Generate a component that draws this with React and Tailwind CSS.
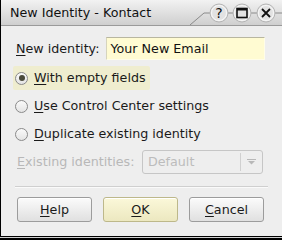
import React from "react";

const FONT = { fontFamily: '"DejaVu Sans", "Liberation Sans", sans-serif' };

function U({ children }) {
  return <span className="underline underline-offset-2">{children}</span>;
}

function Radio({ checked, label, hl }) {
  return (
    <div
      className={`flex h-[24px] items-center gap-[6px] self-start rounded-[2px] pl-[2px] pr-[4px] ${
        hl ? "bg-[#efedcf]" : ""
      }`}
    >
      <span className="flex h-[13px] w-[13px] items-center justify-center rounded-full border border-[#8a8a8a] bg-gradient-to-b from-[#fafafa] to-[#e4e4e4]">
        {checked && <span className="h-[6px] w-[6px] rounded-full bg-[#4a4a3a]" />}
      </span>
      <span className="text-[12.7px] text-[#1a1a1a]">{label}</span>
    </div>
  );
}

function Btn({ children, active }) {
  return (
    <div
      className={`flex h-[25px] w-[75px] items-center justify-center rounded-[3px] border text-[12.7px] text-[#1a1a1a] shadow-[0_1px_0_#ffffff_inset] ${
        active
          ? "border-[#bdb88a] bg-gradient-to-b from-[#fbf8d9] to-[#ece8c0]"
          : "border-[#9c9c9c] bg-gradient-to-b from-[#fbfbfb] to-[#e0e0e0]"
      }`}
    >
      {children}
    </div>
  );
}

function TitleButtons() {
  return (
    <svg width="100" height="25" viewBox="0 0 100 25" className="absolute right-0 top-0">
      <line x1="8" y1="25" x2="22" y2="13" stroke="#8a8a8a" strokeWidth="1" />
      <line x1="22" y1="13" x2="100" y2="13" stroke="#8a8a8a" strokeWidth="1" />
      {[37, 60, 84].map((cx) => (
        <g key={cx}>
          <circle cx={cx} cy="13" r="9" fill="#e8e8e8" stroke="#b4b4b4" />
          <circle cx={cx} cy="13" r="7.5" fill="#e2e2e2" stroke="#f8f8f8" />
        </g>
      ))}
      <text x="37" y="18" textAnchor="middle" fontSize="14" fontFamily="DejaVu Sans" fill="#111">?</text>
      <rect x="55" y="8.5" width="10" height="9" fill="none" stroke="#111" strokeWidth="1.6" />
      <line x1="55" y1="9.5" x2="65" y2="9.5" stroke="#111" strokeWidth="2" />
      <path d="M80 9 L88 17 M88 9 L80 17" stroke="#111" strokeWidth="1.8" />
    </svg>
  );
}

export default function App() {
  return (
    <div className="h-[240px] w-[282px] overflow-hidden bg-[#eeeeee]" style={FONT}>
      <div className="flex h-[237px] flex-col border-l border-b border-black">
        <div className="relative flex h-[26px] shrink-0 items-center border-b border-[#9a9a9a] bg-gradient-to-b from-[#f2f2f2] to-[#cfcfcf] pl-[9px]">
          <span className="text-[12.7px] text-[#111]">New Identity - Kontact</span>
          <TitleButtons />
        </div>

        <div className="flex flex-col px-[12px] pt-[11px]">
          <div className="flex items-center gap-[7px] pl-[3px]">
            <span className="text-[12.7px] text-[#1a1a1a]">
              <U>N</U>ew identity:
            </span>
            <div className="flex h-[23px] w-[159px] items-center border border-[#fffde8] border-t-[#b8b6a0] border-l-[#d6d4bc] bg-[#fffbd2] pl-[3px] text-[12.7px] text-[#111]">
              Your New Email
            </div>
          </div>

          <div className="mt-[6px] flex flex-col gap-[4px]">
            <Radio checked hl label={<><U>W</U>ith empty fields</>} />
            <Radio label={<><U>U</U>se Control Center settings</>} />
            <Radio label={<><U>D</U>uplicate existing identity</>} />
          </div>

          <div className="mt-[4px] flex items-center justify-between pl-[4px] pr-[7px]">
            <span className="text-[12.7px] text-[#b8b8b8]">
              <U>E</U>xisting identities:
            </span>
            <div className="flex h-[24px] w-[121px] items-center rounded-[3px] border border-[#c6c6c6] bg-[#eeeeee]">
              <span className="flex-1 pl-[5px] text-[12.7px] text-[#bcbcbc]">Default</span>
              <div className="flex h-[18px] w-[22px] items-center justify-center border-l border-[#d0d0d0]">
                <svg width="9" height="6" viewBox="0 0 9 6">
                  <line x1="0" y1="0.5" x2="9" y2="0.5" stroke="#b8b8b8" />
                  <path d="M1 2 L8 2 L4.5 5.5 Z" fill="#b8b8b8" />
                </svg>
              </div>
            </div>
          </div>

          <div className="mt-[12px] mr-[2px] ml-[2px] h-[2px] border-t border-[#cfcfcf] border-b border-b-[#fafafa]" />

          <div className="mt-[9px] flex gap-[11px] pl-[4px]">
            <Btn><span><U>H</U>elp</span></Btn>
            <Btn active><span><U>O</U>K</span></Btn>
            <Btn><span><U>C</U>ancel</span></Btn>
          </div>
        </div>
      </div>
      <div className="h-[1px] bg-[#cfcfcf]" />
      <div className="h-[2px] bg-black" />
    </div>
  );
}
